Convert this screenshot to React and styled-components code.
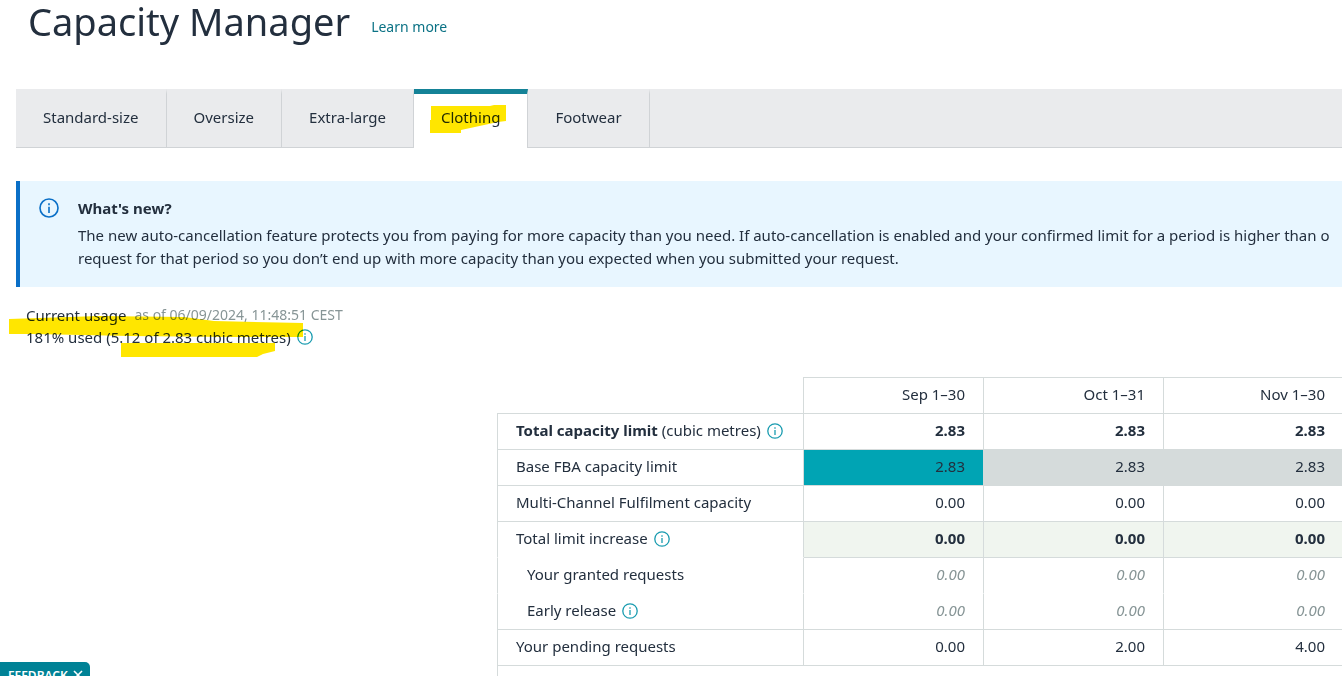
import React from 'react';
import styled, { createGlobalStyle } from 'styled-components';

const color = {
  text: '#232f3e',
  muted: '#879596',
  link: '#0b7285',
  teal: '#008296',
  tealFill: '#00a4b4',
  tabActive: '#148297',
  tabBar: '#eaebed',
  tabLine: '#d0d3d6',
  line: '#d5dbdb',
  greyFill: '#d5dbdb',
  greenFill: '#f0f5ef',
  banner: '#e8f6ff',
  blue: '#0a6fc7',
  marker: '#ffe600',
}

const GlobalStyle = createGlobalStyle`
  * { box-sizing: border-box; }

  body {
    margin: 0;
    background: #fff;
    color: ${color.text};
    font-family: "Noto Sans", "Open Sans", sans-serif;
    font-size: 15px;
    line-height: 23px;
    overflow: hidden;
  }

  button {
    font: inherit;
    color: inherit;
    cursor: pointer;
  }
`

const Page = styled.div`
  height: 100vh;
  overflow: hidden;
`

const Header = styled.header`
  display: flex;
  align-items: center;
  gap: 21px;
  padding: 2px 0 0 28px;
`

const Title = styled.h1`
  margin: 0;
  font-size: 38px;
  font-weight: 400;
  line-height: 38px;
`

const LearnMore = styled.a`
  padding-top: 11px;
  color: ${color.link};
  font-size: 14px;
  text-decoration: none;
`

const TabBar = styled.nav`
  display: flex;
  height: 59px;
  margin: 49px 0 33px 16px;
  background: ${color.tabBar};
  box-shadow: inset 0 -1px ${color.tabLine};
`

const Tab = styled.button`
  padding: 0 27px 7px;
  border: 0;
  border-right: 1px solid ${color.tabLine};
  border-top: 5px solid ${props => props.$active ? color.tabActive : color.tabBar};
  background: ${props => props.$active ? '#fff' : 'none'};
`

// text swiped over with a yellow marker pen
const Marked = styled.span`
  position: relative;
`

const MarkerSvg = styled.svg`
  position: absolute;
  left: ${props => props.$left}px;
  top: ${props => props.$top}px;
  mix-blend-mode: multiply;
  pointer-events: none;
  fill: ${color.marker};
`

const Banner = styled.section`
  display: flex;
  gap: 19px;
  margin-left: 16px;
  padding: 16px 0 17px 19px;
  border-left: 4px solid ${color.blue};
  background: ${color.banner};
  overflow: hidden;
`

const BannerBody = styled.div`
  flex: none;
`

const BannerTitle = styled.h2`
  margin: 0 0 4px;
  font-size: 15px;
  font-weight: 700;
  line-height: 23px;
`

const BannerText = styled.p`
  margin: 0;
  white-space: nowrap;
`

const Usage = styled.section`
  position: relative;
  margin: 17px 0 0 26px;
  line-height: 22px;
`

const UsageRow = styled.div`
  display: flex;
  align-items: center;
  gap: ${props => props.$gap}px;
`

const AsOf = styled.span`
  color: ${color.muted};
  font-size: 14px;
`

const InfoButton = styled.button`
  display: inline-flex;
  flex: none;
  align-self: ${props => props.$top ? 'flex-start' : 'auto'};
  padding: ${props => props.$top ? '1px 0 0' : 0};
  border: 0;
  background: none;
  color: ${props => props.$top ? color.blue : '#1a9cb0'};
`

const TableArea = styled.div`
  margin: 29px 0 0 497px;
`

const Table = styled.table`
  width: 1027px;
  table-layout: fixed;
  border-collapse: separate;
  border-spacing: 0;
`

const Cell = styled.td`
  height: 36px;
  padding: 0 18px 2px;
  border-right: 1px solid ${color.line};
  border-bottom: 1px solid ${props => props.$open ? 'transparent' : color.line};
  background: ${props => props.$fill || 'none'};
  color: ${props => props.$muted ? color.muted : color.text};
  font-style: ${props => props.$muted ? 'italic' : 'normal'};
  font-weight: ${props => props.$bold ? 700 : 400};
  text-align: right;
`

const MonthCell = styled(Cell)`
  height: 37px;
  border-top: 1px solid ${color.line};
`

const LabelCell = styled(Cell)`
  padding-left: ${props => props.$indent ? 29 : 18}px;
  border-left: 1px solid ${color.line};
  text-align: left;
`

const Corner = styled(Cell)`
  width: 307px;
`

const LastCell = styled(Cell)`
  border-left: 1px solid ${color.line};
`

const Label = styled.span`
  display: flex;
  align-items: center;
  gap: 6px;
  white-space: nowrap;
`

const Feedback = styled.button`
  position: fixed;
  left: 0;
  bottom: -12px;
  display: flex;
  align-items: center;
  gap: 5px;
  height: 26px;
  padding: 0 7px 0 8px;
  border: 0;
  border-radius: 0 5px 0 0;
  background: ${color.teal};
  color: #fff;
  font-size: 12px;
  font-weight: 600;
`

const Info = ({ size = 16, top }) => (
  <InfoButton type="button" aria-label="More information" $top={top}>
    <svg width={size} height={size} viewBox="0 0 16 16" fill="none" stroke="currentColor" strokeWidth="1.3">
      <circle cx="8" cy="8" r="7.2" />
      <path d="M8 7v5" />
      <path d="M8 4.2v1.5" />
    </svg>
  </InfoButton>
)

const tabs = ['Standard-size', 'Oversize', 'Extra-large', 'Clothing', 'Footwear'];

const months = ['Sep 1–30', 'Oct 1–31', 'Nov 1–30', 'Dec 1–31'];

const rows = [
  { label: <span><b>Total capacity limit</b> (cubic metres)</span>, info: true, values: ['2.83', '2.83', '2.83', '2.83'], bold: true },
  { label: 'Base FBA capacity limit', values: ['2.83', '2.83', '2.83', '2.83'], fills: [color.tealFill, color.greyFill, color.greyFill, color.greyFill] },
  { label: 'Multi-Channel Fulfilment capacity', values: ['0.00', '0.00', '0.00', '0.00'] },
  { label: 'Total limit increase', info: true, values: ['0.00', '0.00', '0.00', '0.00'], bold: true, fills: Array(4).fill(color.greenFill), openLabel: true },
  { label: 'Your granted requests', values: ['0.00', '0.00', '0.00', '0.00'], indent: true, muted: true, openLabel: true, open: true },
  { label: 'Early release', info: true, values: ['0.00', '0.00', '0.00', '0.00'], indent: true, muted: true },
  { label: 'Your pending requests', values: ['0.00', '2.00', '4.00', '0.00'] },
];

const CapacityTable = () => (
  <Table>
    <thead>
      <tr>
        <Corner />
        {months.map(month => <MonthCell as="th" scope="col" key={month}>{month}</MonthCell>)}
      </tr>
    </thead>
    <tbody>
      {rows.map((row, i) => (
        <tr key={i}>
          <LabelCell as="th" scope="row" $indent={row.indent} $open={row.openLabel}>
            <Label>{row.label}{row.info && <Info />}</Label>
          </LabelCell>
          {row.values.map((value, n) => (
            <Cell key={n} $bold={row.bold} $muted={row.muted} $open={row.open} $fill={row.fills && row.fills[n]}>
              {value}
            </Cell>
          ))}
        </tr>
      ))}
      <tr><LastCell colSpan={5} /></tr>
    </tbody>
  </Table>
)

export default function App() {
  return (
    <Page>
      <GlobalStyle />
      <Header>
        <Title>Capacity Manager</Title>
        <LearnMore href="#learn">Learn more</LearnMore>
      </Header>

      <TabBar>
        {tabs.map(tab => (
          <Tab key={tab} type="button" $active={tab === 'Clothing'}>
            {tab === 'Clothing' ? (
              <Marked>
                {tab}
                <MarkerSvg $left={-11} $top={-2} width="78" height="30">
                  <path d="M1 1 L60 1 L64 0 L76 0 L76 16 L68 17 L31 25 L31 28 L0 28 L0 15 L1 15 Z" />
                </MarkerSvg>
              </Marked>
            ) : tab}
          </Tab>
        ))}
      </TabBar>

      <Banner>
        <Info size={20} top />
        <BannerBody>
          <BannerTitle>What's new?</BannerTitle>
          <BannerText>
            The new auto-cancellation feature protects you from paying for more capacity than you need. If auto-cancellation is enabled and your confirmed limit for a period is higher than o<br />
            request for that period so you don’t end up with more capacity than you expected when you submitted your request.
          </BannerText>
        </BannerBody>
      </Banner>

      <Usage>
        <UsageRow $gap={8}>
          <span>Current usage</span>
          <AsOf>as of 06/09/2024, 11:48:51 CEST</AsOf>
        </UsageRow>
        <UsageRow $gap={6}>
          <span>181% used (5.12 of 2.83 cubic metres)</span>
          <Info />
        </UsageRow>
        <MarkerSvg $left={-17} $top={12} width="296" height="44">
          <path d="M0 3 L60 1 L90 0 L175 1 L205 5 L294 7 L294 21 L220 21 L120 20 L25 18 L0 18 Z" />
          <path d="M112 27 H266 V35 L254 38 L248 41 H112 Z" />
        </MarkerSvg>
      </Usage>

      <TableArea>
        <CapacityTable />
      </TableArea>

      <Feedback type="button">
        FEEDBACK
        <svg width="10" height="10" viewBox="0 0 10 10" stroke="currentColor" strokeWidth="1.6" aria-hidden="true">
          <path d="M1 1l8 8M9 1l-8 8" />
        </svg>
      </Feedback>
    </Page>
  );
}
